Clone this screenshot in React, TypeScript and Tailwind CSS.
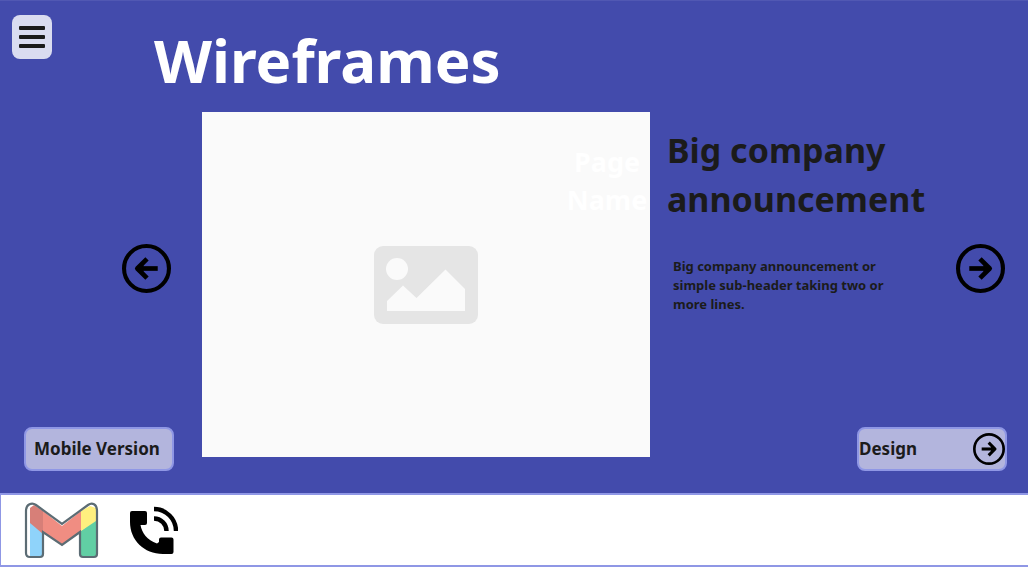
import React from "react";

function ArrowCircle({ flip = false, className = "" }: { flip?: boolean; className?: string }) {
  return (
    <svg viewBox="0 0 48 48" fill="none" stroke="#000" className={`${className} ${flip ? "rotate-180" : ""}`} aria-hidden="true">
      <circle cx="24" cy="24" r="22" strokeWidth="4" />
      <path d="M13 24H32" strokeWidth="4.6" />
      <path d="M23.500 14.500 33 24l-9.500 9.500" strokeWidth="4.6" strokeLinejoin="round" />
      <path d="M27 19.500 33 24l-6 4.500z" fill="#000" stroke="none" />
    </svg>
  );
}

function PictureIcon() {
  return (
    <svg viewBox="0 0 104 78" className="h-[78px] w-[104px]" aria-hidden="true">
      <rect width="104" height="78" rx="9" fill="#e5e5e5" />
      <circle cx="23" cy="23" r="11" fill="#fafafa" />
      <path d="M13 65V55L29 39.500 42.500 52 71.500 23.500 91 43V65Z" fill="#fafafa" />
    </svg>
  );
}

function MailIcon() {
  return (
    <svg viewBox="0 0 76 58" className="h-[58px] w-[76px]" aria-hidden="true">
      <path d="M6 20v36h13V31z" fill="#8fd3fa" />
      <path d="M57 30v26h15V18z" fill="#61cfa4" />
      <path d="M6 7 10 4 19 10V33L6 22z" fill="#d77f78" />
      <path d="M19 10 38 25 57 10V30L38 44 19 32z" fill="#f08d82" />
      <path d="M57 10 66 5 72 7V20L57 30z" fill="#fff07f" />
      <path
        d="M2 10C2 3 8 1 12 4L38 23 64 4C68 1 73 3 73 10V53Q73 56 70 56H59Q56 56 56 53V31L38 44 19 31V53Q19 56 16 56H6Q2 56 2 52Z"
        fill="none"
        stroke="#5c6c74"
        strokeWidth="2.2"
      />
    </svg>
  );
}

function PhoneIcon() {
  return (
    <svg viewBox="0 0 49 49" className="size-[49px]" aria-hidden="true">
      <path d="M3 5H16Q18 5 18 7V17Q18 19 16 19H11.500C13 27 18 34 28 37.500L30 36V33.500Q30 31.500 32 31.500H42.500Q44.500 31.500 44.500 33.500V46Q44.500 48 42.500 48H34C15 48 1 34 1 16V7Q1 5 3 5Z" />
      <path d="M25 3A22 22 0 0 1 47 25M25 12.500A12.500 12.500 0 0 1 37.500 25" fill="none" stroke="#000" strokeWidth="4.4" />
    </svg>
  );
}

export default function App() {
  return (
    <div className="flex min-h-screen flex-col border-t border-[#5158b3] bg-[#434bac] font-['Noto_Sans',sans-serif] text-[#1b1b1b]">
      <header className="flex items-start pl-3">
        <button aria-label="Menu" className="mt-[14px] flex h-11 w-10 flex-col items-center justify-center gap-[5px] rounded-lg bg-[#dadcf0]">
          <span className="h-1 w-[26px] rounded-[1px] bg-[#1b1b1b]" />
          <span className="h-1 w-[26px] rounded-[1px] bg-[#1b1b1b]" />
          <span className="h-1 w-[26px] rounded-[1px] bg-[#1b1b1b]" />
        </button>
        <h1 className="ml-[102px] pt-[18px] text-[60px] leading-[82px] font-bold text-white">Wireframes</h1>
      </header>

      <main className="flex flex-1 pt-[11px] pb-[22px]">
        <div className="flex w-[202px] flex-col justify-between pt-[132px] pl-6">
          <button aria-label="Previous" className="ml-[98px] w-[49px]">
            <ArrowCircle flip className="size-[49px]" />
          </button>
          <button className="h-11 w-[150px] rounded-lg border-2 border-[#8f97e5] bg-[#b3b5dd] pl-2 text-left text-[17px] font-bold">
            Mobile Version
          </button>
        </div>

        <section className="relative mb-[14px] flex min-h-[345px] flex-1 items-center justify-center bg-[#fafafa]">
          <PictureIcon />
          <h2 className="absolute top-[31px] right-0 w-[86px] text-center text-[27px] leading-[38px] font-bold text-white">Page Name</h2>
        </section>

        <section className="flex w-[378px] flex-col justify-between pr-[21px]">
          <div className="flex justify-between pt-[14px] pr-[2px] pl-[17px]">
            <div className="w-[270px]">
              <h2 className="text-[34px] leading-[49px] font-bold">Big company announcement</h2>
              <p className="w-[232px] pt-[33px] pl-[6px] text-[13px] leading-[19px] font-bold">
                Big company announcement or simple sub-header taking two or more lines.
              </p>
            </div>
            <button aria-label="Next" className="mt-[118px] size-[49px] shrink-0">
              <ArrowCircle className="size-[49px]" />
            </button>
          </div>
          <button className="flex h-11 w-[150px] items-center justify-between self-end rounded-lg border-2 border-[#8f97e5] bg-[#b3b5dd] text-[17px] font-bold">
            Design
            <ArrowCircle className="size-8" />
          </button>
        </section>
      </main>

      <footer className="flex h-[74px] items-center gap-[29px] border-y-2 border-l border-[#8f97e5] bg-white pl-[23px]">
        <a href="#mail" aria-label="Email">
          <MailIcon />
        </a>
        <a href="#phone" aria-label="Phone">
          <PhoneIcon />
        </a>
      </footer>
    </div>
  );
}
